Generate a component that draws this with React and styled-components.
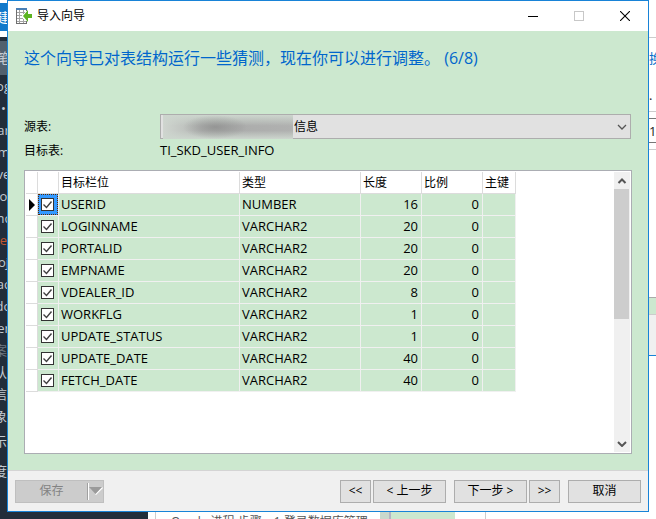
import React, { useState } from "react";
import styled, { createGlobalStyle, css } from "styled-components";

const columns = [
  { key: "name", title: "目标栏位", width: 181 },
  { key: "type", title: "类型", width: 121 },
  { key: "length", title: "长度", width: 61, align: "right" },
  { key: "scale", title: "比例", width: 61, align: "right" },
  { key: "primary", title: "主键", width: 33 },
];

const initialFields = [
  { name: "USERID", type: "NUMBER", length: 16, scale: 0 },
  { name: "LOGINNAME", type: "VARCHAR2", length: 20, scale: 0 },
  { name: "PORTALID", type: "VARCHAR2", length: 20, scale: 0 },
  { name: "EMPNAME", type: "VARCHAR2", length: 20, scale: 0 },
  { name: "VDEALER_ID", type: "VARCHAR2", length: 8, scale: 0 },
  { name: "WORKFLG", type: "VARCHAR2", length: 1, scale: 0 },
  { name: "UPDATE_STATUS", type: "VARCHAR2", length: 1, scale: 0 },
  { name: "UPDATE_DATE", type: "VARCHAR2", length: 40, scale: 0 },
  { name: "FETCH_DATE", type: "VARCHAR2", length: 40, scale: 0 },
];

const editorLines = [
  { text: "og" },
  { text: "•" },
  { text: "ar" },
  { text: "m" },
  { text: "ve" },
  { text: "o" },
  { text: "nc" },
  { text: "e", color: "#c0562f" },
  { text: "oj" },
  { text: "ac" },
  { text: "do" },
  { text: "er" },
  { text: "案", color: "#6d7680", align: "flex-end" },
  { text: "认", align: "flex-end" },
  { text: "信", align: "flex-end" },
  { text: "象", align: "flex-end" },
  { text: "示", align: "flex-end", height: 28 },
  { text: "度", align: "flex-end", height: 32 },
];

function WizardIcon() {
  return (
    <svg width="16" height="16" viewBox="0 0 16 16" shapeRendering="crispEdges">
      <path fill="#fff" d="M0 0h11v16H0z" />
      <path fill="#4a7fb5" d="M0 0h11v2H0z" />
      <path
        fill="#6f6f6f"
        d="M0 2h1v14H0zM10 2h1v1h-1zM10 13h1v3h-1zM0 15h11v1H0z"
      />
      <path
        fill="#a4a4a4"
        d="M1 4h8v1H1zM1 7h5v1H1zM1 10h6v1H1zM1 13h9v1H1zM3 2h1v13H3zM7 2h1v4H7zM7 11h1v4H7z"
      />
      <path
        fill="#5cb321"
        shapeRendering="auto"
        d="M7 8l5-6v4h4v4h-4v4z"
      />
    </svg>
  );
}

function Check() {
  return (
    <svg width="13" height="13" viewBox="0 0 13 13">
      <path d="M2.5 6.5l3 3 5-6" fill="none" stroke="#404040" strokeWidth="1.4" />
    </svg>
  );
}

function Chevron({ up, bold }) {
  return (
    <svg width="10" height="6" viewBox="0 0 10 6">
      <path
        d={up ? "M1.5 5L5 1.5 8.500 5" : "M1 1l4 4 4-4"}
        fill="none"
        stroke="#555"
        strokeWidth={bold ? 2 : 1.3}
      />
    </svg>
  );
}

function App() {
  const [checked, setChecked] = useState(initialFields.map(() => true));

  const toggle = (index) => {
    setChecked(checked.map((value, i) => (i === index ? !value : value)));
  };

  return (
    <Desktop>
      <GlobalStyle />
      <LeftStrip>
        <Tab>建</Tab>
        <Rule />
        <ActiveLine>笔</ActiveLine>
        {editorLines.map((line) => (
          <EditorLine
            key={line.text}
            $color={line.color}
            $height={line.height}
            $align={line.align}
          >
            {line.text}
          </EditorLine>
        ))}
      </LeftStrip>

      <Dialog>
        <TitleBar>
          <WizardIcon />
          <h1>导入向导</h1>
          <WindowButton aria-label="最小化">
            <svg width="10" height="11" shapeRendering="crispEdges">
              <path d="M0 5h10v1H0z" fill="#000" />
            </svg>
          </WindowButton>
          <WindowButton aria-label="最大化" disabled>
            <svg width="10" height="10" shapeRendering="crispEdges">
              <path d="M.5.5h9v9h-9z" fill="none" stroke="#c8c8c8" />
            </svg>
          </WindowButton>
          <WindowButton aria-label="关闭">
            <svg width="10" height="10">
              <path d="M0 0l10 10M10 0L0 10" stroke="#000" strokeWidth="1.1" />
            </svg>
          </WindowButton>
        </TitleBar>

        <Content>
          <Heading>这个向导已对表结构运行一些猜测，现在你可以进行调整。 (6/8)</Heading>
          <Form>
            <label htmlFor="source">源表:</label>
            <SelectBox>
              <select id="source">
                <option>信息</option>
              </select>
              <Redaction />
              <Chevron />
            </SelectBox>
            <span>目标表:</span>
            <Target>TI_SKD_USER_INFO</Target>
          </Form>

          <Panel>
            <TableArea>
              <Table>
                <colgroup>
                  <Col $width={12} />
                  <Col $width={21} />
                  {columns.map((column) => (
                    <Col key={column.key} $width={column.width} />
                  ))}
                </colgroup>
                <thead>
                  <tr>
                    <HeadCell />
                    <HeadCell />
                    {columns.map((column) => (
                      <HeadCell key={column.key}>{column.title}</HeadCell>
                    ))}
                  </tr>
                </thead>
                <tbody>
                  {initialFields.map((field, index) => (
                    <tr key={field.name}>
                      <MarkerCell>
                        {index === 0 && (
                          <svg width="6" height="12" viewBox="0 0 6 12">
                            <path d="M0 0l6 6-6 6z" />
                          </svg>
                        )}
                      </MarkerCell>
                      <CheckCell>
                        <CheckLabel $active={index === 0}>
                          <input
                            type="checkbox"
                            aria-label={field.name}
                            checked={checked[index]}
                            onChange={() => toggle(index)}
                          />
                          {checked[index] && <Check />}
                        </CheckLabel>
                      </CheckCell>
                      {columns.map((column) => (
                        <Cell key={column.key} $align={column.align}>
                          {field[column.key]}
                        </Cell>
                      ))}
                    </tr>
                  ))}
                </tbody>
              </Table>
            </TableArea>
            <ScrollBar>
              <ScrollButton aria-label="向上">
                <Chevron up bold />
              </ScrollButton>
              <ScrollTrack>
                <ScrollThumb />
              </ScrollTrack>
              <ScrollButton aria-label="向下">
                <Chevron bold />
              </ScrollButton>
            </ScrollBar>
          </Panel>
        </Content>

        <Footer>
          <SaveGroup>
            <SaveButton disabled>保存</SaveButton>
            <SaveArrow disabled aria-label="更多">
              <svg width="14" height="8" viewBox="0 0 14 8">
                <path d="M7 8l7-7-1-1-7 7z" fill="#fff" />
                <path d="M0 0h13L6.500 7z" fill="#9a9a9a" />
              </svg>
            </SaveArrow>
          </SaveGroup>
          <ButtonGroup>
            <Button $narrow>&lt;&lt;</Button>
            <Button>&lt; 上一步</Button>
          </ButtonGroup>
          <ButtonGroup>
            <Button>下一步 &gt;</Button>
            <Button $narrow>&gt;&gt;</Button>
          </ButtonGroup>
          <Button>取消</Button>
        </Footer>
      </Dialog>

      <RightStrip>
        <RightBlock $height={38} $line="#ccc" />
        <RightBlock $height={40} $color="#0a6fc9">换</RightBlock>
        <RightBlock $height={34} $line="#ccc">.</RightBlock>
        <RightBlock $height={7} $line="#777" />
        <RightBlock $height={24} $line="#777">16</RightBlock>
        <RightBlock $height={7} $line="#ccc" />
        <RightBlock $height={148} $line="#aaa" />
        <RightBlock $height={17} $fill="#cce8cf" $line="#ccc" />
        <RightBlock $height={41} $fill="#f0f0f0" $line="#1883d7" />
      </RightStrip>

      <BottomStrip>
        <BottomDark />
        <BottomGutter />
        <BottomText>Oracle 进程 步骤，1 登录数据库管理</BottomText>
        <BottomEdge />
        <BottomGreen />
        <BottomGutter $wide />
      </BottomStrip>
    </Desktop>
  );
}

const GlobalStyle = createGlobalStyle`
  * {
    box-sizing: border-box;
  }
  body {
    margin: 0;
    background: #fff;
    color: #000;
    font: 12px/16px "Open Sans", "Noto Sans CJK SC", sans-serif;
  }
  button, select, input {
    margin: 0;
    font: inherit;
    color: inherit;
  }
  svg {
    display: block;
    flex: none;
  }
`;

const Desktop = styled.div`
  display: grid;
  grid-template-columns: 7px minmax(0, 1fr) 7px;
  grid-template-rows: 1fr 7px;
  min-height: 100vh;
`;

const LeftStrip = styled.aside`
  grid-row: 1 / 3;
  background: #222d3a;
  color: #c3cad1;
  overflow: hidden;
  font-size: 13px;
`;

const stripLine = css`
  display: flex;
  align-items: center;
  justify-content: ${({ $align }) => $align || "center"};
  overflow: hidden;
  white-space: nowrap;
`;

const Tab = styled.div`
  ${stripLine}
  height: 31px;
  border-top: 3px solid #fff;
  background: #1179cb;
  color: #fff;
`;

const Rule = styled.div`
  height: 10px;
  border-top: 6px solid #fff;
`;

const ActiveLine = styled.div`
  ${stripLine}
  height: 34px;
  background: #51606e;
  font-size: 14px;
`;

const EditorLine = styled.div`
  ${stripLine}
  height: ${({ $height }) => $height || 22}px;
  color: ${({ $color }) => $color || "inherit"};
`;

const Dialog = styled.main`
  display: flex;
  flex-direction: column;
  border: 1px solid #1883d7;
  background: #cce8cf;
`;

const TitleBar = styled.header`
  display: flex;
  align-items: center;
  height: 30px;
  padding-left: 8px;
  background: #fff;
  h1 {
    flex: 1;
    margin: 0 0 0 5px;
    font-size: 12px;
    font-weight: 400;
  }
`;

const WindowButton = styled.button`
  display: flex;
  align-items: center;
  justify-content: center;
  width: 46px;
  height: 30px;
  padding: 0;
  border: 0;
  background: none;
`;

const Content = styled.section`
  display: flex;
  flex-direction: column;
  flex: 1;
  padding: 15px 16px 16px;
`;

const Heading = styled.h2`
  margin: 0 0 44px;
  color: #0066cc;
  font-size: 16px;
  font-weight: 400;
  line-height: 24px;
`;

const Form = styled.div`
  display: grid;
  grid-template-columns: 136px 1fr;
  align-items: center;
  line-height: 24px;
  margin-bottom: 7px;
`;

const SelectBox = styled.div`
  position: relative;
  height: 25px;
  margin-right: 1px;
  select {
    width: 100%;
    height: 25px;
    padding: 0 20px 0 133px;
    border: 1px solid #adadad;
    border-radius: 0;
    background: #e1e1e1;
    appearance: none;
  }
  svg {
    position: absolute;
    top: 10px;
    right: 4px;
    pointer-events: none;
  }
`;

const Redaction = styled.span`
  position: absolute;
  top: 1px;
  left: 3px;
  width: 130px;
  height: 24px;
  background: radial-gradient(ellipse 32px 12px at 52px 12px, rgba(120, 120, 120, 0.5), transparent),
    linear-gradient(rgba(205, 214, 206, 1), transparent 45% 65%, rgba(205, 214, 206, 1)),
    linear-gradient(90deg, #cfd5cf, #b4b6b4 30%, #acadac 60%, #b0b1b0);
`;

const Target = styled.span`
  padding-bottom: 2px;
  font-size: 13px;
  line-height: 22px;
`;

const Panel = styled.div`
  display: flex;
  flex: 1;
  padding: 1px;
  border: 1px solid #abadb3;
  background: #fff;
`;

const TableArea = styled.div`
  flex: 1;
  min-width: 0;
`;

const Table = styled.table`
  width: 490px;
  table-layout: fixed;
  border-collapse: separate;
  border-spacing: 0;
`;

const Col = styled.col`
  width: ${({ $width }) => $width}px;
`;

const HeadCell = styled.th`
  height: 22px;
  padding: 0 2px;
  border-right: 1px solid #dcdcdc;
  border-bottom: 1px solid #dcdcdc;
  font-weight: 400;
  text-align: left;
  white-space: nowrap;
`;

const Cell = styled.td`
  height: 22px;
  padding: 0 3px 2px 2px;
  border-right: 1px solid #f0f0f0;
  border-bottom: 1px solid #f0f0f0;
  background: #cce8cf;
  font-size: 13px;
  text-align: ${({ $align }) => $align || "left"};
  white-space: nowrap;
`;

const MarkerCell = styled(Cell)`
  padding: 0 0 0 3px;
  border-color: #dcdcdc;
  background: #fff;
`;

const CheckCell = styled(Cell)`
  padding: 0;
`;

const CheckLabel = styled.label`
  position: relative;
  display: flex;
  align-items: center;
  height: 21px;
  padding-left: 3px;
  background: ${({ $active }) => ($active ? "#3399ff" : "none")};
  outline: ${({ $active }) => ($active ? "1px dotted #5b2a00" : "none")};
  outline-offset: -1px;
  input {
    width: 13px;
    height: 13px;
    border: 1px solid #333;
    background: #fff;
    appearance: none;
  }
  svg {
    position: absolute;
  }
`;

const ScrollBar = styled.div`
  display: flex;
  flex-direction: column;
  width: 16px;
  background: #f0f0f0;
`;

const ScrollButton = styled.button`
  display: flex;
  align-items: center;
  justify-content: center;
  height: 17px;
  padding: 0;
  border: 0;
  background: none;
`;

const ScrollTrack = styled.div`
  flex: 1;
`;

const ScrollThumb = styled.div`
  width: 15px;
  height: 130px;
  background: #cdcdcd;
`;

const Footer = styled.footer`
  display: flex;
  align-items: center;
  gap: 8px;
  height: 41px;
  padding: 0 7px;
  border-top: 1px solid #d4d4d4;
  background: #f0f0f0;
`;

const Button = styled.button`
  width: ${({ $narrow }) => ($narrow ? 31 : 73)}px;
  height: 23px;
  padding: 0;
  border: 1px solid #adadad;
  background: #e1e1e1;
  line-height: 20px;
  white-space: nowrap;
`;

const ButtonGroup = styled.div`
  display: flex;
  gap: 2px;
`;

const SaveGroup = styled.div`
  display: flex;
  width: 89px;
  height: 23px;
  margin-right: auto;
  border: 1px solid #bfbfbf;
  background: #ccc;
  color: #838383;
`;

const SaveButton = styled.button`
  flex: 1;
  padding: 0;
  border: 0;
  background: none;
`;

const SaveArrow = styled.button`
  display: flex;
  align-items: center;
  justify-content: center;
  width: 16px;
  height: 17px;
  margin: 2px 0;
  padding: 0;
  border: 0;
  border-left: 1px solid #a0a0a0;
  background: none;
  box-shadow: inset 1px 0 #fff;
`;

const RightStrip = styled.aside`
  overflow: hidden;
  background: #fff;
  font-size: 13px;
`;

const RightBlock = styled.div`
  display: flex;
  align-items: center;
  height: ${({ $height }) => $height}px;
  overflow: hidden;
  border-bottom: ${({ $line }) => ($line ? `1px solid ${$line}` : 0)};
  background: ${({ $fill }) => $fill || "#fff"};
  color: ${({ $color }) => $color || "#222"};
`;

const BottomStrip = styled.div`
  grid-column: 2 / 4;
  display: flex;
  height: 7px;
  overflow: hidden;
  background: #fff;
`;

const BottomDark = styled.div`
  width: 141px;
  background: #222d3a;
`;

const BottomGutter = styled.div`
  width: ${({ $wide }) => ($wide ? 31 : 8)}px;
  border-right: 1px solid #ccc;
`;

const BottomText = styled.div`
  width: 224px;
  padding: 2px 0 0 15px;
  color: #555;
  white-space: nowrap;
`;

const BottomEdge = styled.div`
  width: 11px;
  border-right: 2px solid #b4b4c4;
  background: #c9d8cc;
`;

const BottomGreen = styled.div`
  width: 64px;
  background: #cce8cf;
`;

export default App;
